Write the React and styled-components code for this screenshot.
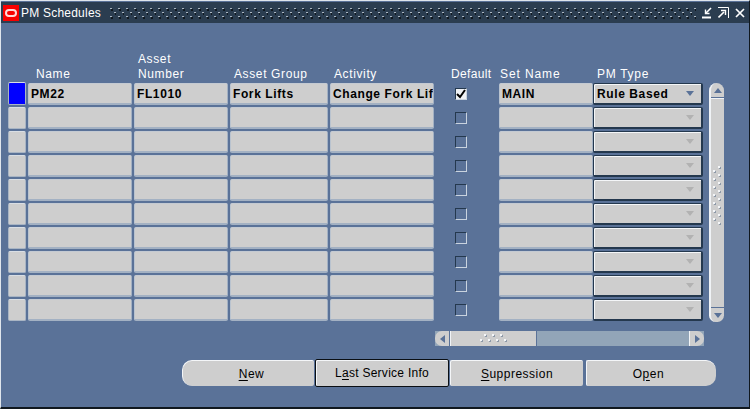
import React from 'react';
import styled, { createGlobalStyle } from 'styled-components';

const GlobalStyle = createGlobalStyle`
	html, body { margin: 0; padding: 0; background: #5a7298; overflow: hidden; }
	* { box-sizing: border-box; }
`;

const Window = styled.div`
	width: 750px;
	height: 409px;
	display: flex;
	flex-direction: column;
	background: #5a7298;
	border-style: solid;
	border-width: 1px 1px 2px 1px;
	border-color: #dfe5ec #10181f #10181f #dfe5ec;
	font-family: "Liberation Sans", Arial, sans-serif;
`;

const TitleBar = styled.div`
	height: 21px;
	margin-top: 1px;
	display: flex;
	align-items: center;
	background: #2b3d50;
	color: #fff;
`;

const Logo = styled.div`
	width: 16px;
	height: 16px;
	margin-left: 2px;
	background: #f80000;
	display: flex;
	align-items: center;
	justify-content: center;
`;

const LogoRing = styled.div`
	width: 12px;
	height: 8px;
	border: 2px solid #ffd8d8;
	border-radius: 4px;
`;

const Title = styled.div`
	font-size: 12px;
	letter-spacing: 0.22px;
	margin-left: 2px;
	white-space: nowrap;
`;

const DotsStrip = styled.svg`
	flex: 1;
	height: 12px;
	min-width: 0;
	margin: 2px 6px 0 7px;
`;

const WinIcons = styled.div`
	display: flex;
	align-items: center;
	margin-right: 4px;
`;

const WinIcon = styled.svg`
	display: block;
	margin-left: ${(p) => p.$gap ?? 0}px;
`;

const Content = styled.div`
	flex: 1;
	display: flex;
	flex-direction: column;
	padding: 27px 0 0 7px;
`;

const TableArea = styled.div`
	display: flex;
	align-items: flex-start;
	gap: 6px;
`;

const COLUMNS = '18px 104px 94px 98px 104px 61px 94px 108px';

const HeaderRow = styled.div`
	display: grid;
	grid-template-columns: ${COLUMNS};
	column-gap: 2px;
	height: 33px;
	align-items: end;
`;

const HeaderLabel = styled.div`
	font-size: 12px;
	line-height: 15px;
	letter-spacing: ${(p) => p.$spacing ?? 0.62}px;
	color: #fff;
	padding-left: ${(p) => p.$indent ?? 4}px;
	padding-bottom: 1px;
	white-space: nowrap;
`;

const Row = styled.div`
	display: grid;
	grid-template-columns: ${COLUMNS};
	column-gap: 2px;
	height: 22px;
	margin-bottom: 2px;
`;

const Selector = styled.div`
	height: ${(p) => (p.$active ? 23 : 22)}px;
	margin-top: ${(p) => (p.$active ? -1 : 0)}px;
	background: ${(p) => (p.$active ? '#0000ff' : '#cecece')};
	border: 1px solid #a9b5c4;
	border-top-color: #d9dee4;
	border-radius: 2px;
`;

const Cell = styled.div`
	height: 22px;
	background: #cecece;
	border-bottom: 2px solid #a3b1c3;
	border-right: 1px solid #a3b1c3;
	border-left: 1px solid #b9c3cf;
	border-top: 1px solid #c4cad2;
	border-radius: 2px;
	font-size: 12px;
	font-weight: bold;
	letter-spacing: 0.6px;
	line-height: 20px;
	padding-left: 2px;
	color: #000;
	white-space: nowrap;
	overflow: hidden;
`;

const CheckCell = styled.div`
	display: flex;
	align-items: center;
	justify-content: center;
	padding-right: 11px;
`;

const CheckBox = styled.div`
	width: 12px;
	height: 12px;
	border-style: solid;
	border-width: 1px;
	border-color: #24384e #c9d3df #c9d3df #24384e;
	background: ${(p) => (p.$checked ? '#eef1f5' : 'transparent')};
	display: flex;
	align-items: center;
	justify-content: center;
`;

const Combo = styled.div`
	height: 22px;
	margin-left: -2px;
	width: 110px;
	background: #cecece;
	border-style: solid;
	border-width: 1px 2px 2px 1px;
	border-color: #24384e;
	box-shadow: inset 1px 1px 0 #f4f6f8;
	border-radius: 2px;
	display: flex;
	align-items: center;
	justify-content: space-between;
	padding: 0 7px 0 3px;
	font-size: 12px;
	font-weight: bold;
	letter-spacing: 0.6px;
	color: #000;
`;

const Arrow = styled.div`
	width: 0;
	height: 0;
	border-left: 4px solid transparent;
	border-right: 4px solid transparent;
	border-top: 5px solid ${(p) => (p.$active ? '#5a7298' : '#b2b2b2')};
`;

const VScroll = styled.div`
	width: 15px;
	height: 239px;
	margin-top: 33px;
	display: flex;
	flex-direction: column;
	background: #cecece;
	border-left: 2px solid #f0f3f6;
	border-radius: 8px 8px 7px 7px;
`;

const VEnd = styled.div`
	height: 15px;
	display: flex;
	align-items: center;
	justify-content: center;
	border-bottom: ${(p) => (p.$top ? '1px solid #5a7298' : 'none')};
	border-top: ${(p) => (p.$top ? 'none' : '1px solid #5a7298')};
	box-shadow: ${(p) => (p.$top ? '0 1px 0 #f0f3f6' : 'none')};
`;

const VTriangle = styled.div`
	width: 0;
	height: 0;
	border-left: 4px solid transparent;
	border-right: 4px solid transparent;
	${(p) => (p.$up ? 'border-bottom: 5px solid #5a7298;' : 'border-top: 5px solid #5a7298;')}
`;

const VThumb = styled.div`
	flex: 1;
	display: flex;
	align-items: center;
	justify-content: center;
	padding-bottom: 14px;
`;

const HScrollRow = styled.div`
	display: flex;
	margin: 8px 0 0 427px;
`;

const HScroll = styled.div`
	width: 269px;
	height: 15px;
	display: flex;
	align-items: stretch;
	background: #92a5b8;
`;

const HTrack = styled.div`
	flex: 1;
`;

const HEnd = styled.div`
	width: 15px;
	display: flex;
	align-items: center;
	justify-content: center;
	background: #cecece;
	border-radius: ${(p) => (p.$left ? '7px 0 0 7px' : '0 7px 7px 0')};
	border-left: ${(p) => (p.$left ? 'none' : '1px solid #f0f3f6')};
	border-right: ${(p) => (p.$left ? '1px solid #5a7298' : 'none')};
`;

const HTriangle = styled.div`
	width: 0;
	height: 0;
	border-top: 4px solid transparent;
	border-bottom: 4px solid transparent;
	${(p) => (p.$left ? 'border-right: 5px solid #5a7298;' : 'border-left: 5px solid #5a7298;')}
`;

const HThumb = styled.div`
	width: 87px;
	background: #cecece;
	border-left: 1px solid #f0f3f6;
	border-right: 1px solid #5a7298;
	display: flex;
	align-items: center;
	justify-content: center;
`;

const ButtonBar = styled.div`
	display: flex;
	margin: 13px 0 0 174px;
	align-items: center;
`;

const Button = styled.div`
	width: ${(p) => p.$width}px;
	height: 26px;
	margin-right: ${(p) => p.$gap ?? 1}px;
	padding: ${(p) => p.$pad ?? '0'};
	display: flex;
	align-items: center;
	justify-content: center;
	background: #cecece;
	color: #000;
	font-size: 12px;
	letter-spacing: ${(p) => p.$spacing ?? 0.55}px;
	border-top: 1px solid #f4f6f8;
	border-left: 1px solid #f4f6f8;
	border-radius: ${(p) => p.$radius ?? '2px'};
	${(p) => p.$focused && 'height: 28px; border: 1px solid #0a0f14; box-shadow: inset 1px 1px 0 #f4f6f8;'}
`;

const Mnemonic = styled.span`
	text-decoration: underline;
	text-underline-offset: 2px;
`;

const rows = Array.from({ length: 10 }, (_, i) => i);

const first = {
	name: 'PM22',
	asset: 'FL1010',
	group: 'Fork Lifts',
	activity: 'Change Fork Lif',
	set: 'MAIN',
	type: 'Rule Based',
};

// grip dot: light square with a darker pixel at lower right
function GripDot({ x, y, light = '#f4f6f8', dark = '#8d99a8' }) {
	return (
		<>
			<rect x={x + 1} y={y + 1} width="2" height="2" fill={dark} />
			<rect x={x} y={y} width="2" height="2" fill={light} />
		</>
	);
}

function VGrip() {
	const right = Array.from({ length: 8 }, (_, i) => i * 8);
	const left = Array.from({ length: 7 }, (_, i) => 4 + i * 8);
	return (
		<svg width="9" height="60" viewBox="0 0 9 60" shapeRendering="crispEdges">
			{right.map((y) => <GripDot key={`r${y}`} x={5} y={y} />)}
			{left.map((y) => <GripDot key={`l${y}`} x={0} y={y} />)}
		</svg>
	);
}

function HGrip() {
	return (
		<svg width="28" height="9" viewBox="0 0 28 9" shapeRendering="crispEdges">
			{[4, 12, 20].map((x) => <GripDot key={`t${x}`} x={x} y={0} />)}
			{[0, 8, 16, 24].map((x) => <GripDot key={`b${x}`} x={x} y={5} />)}
		</svg>
	);
}

function TitleDots() {
	return (
		<DotsStrip shapeRendering="crispEdges">
			<defs>
				<pattern id="titleDots" width="8" height="12" patternUnits="userSpaceOnUse">
					<rect x="3" y="1" width="2" height="2" fill="#10181f" />
					<rect x="2" y="0" width="2" height="1" fill="#aab5c0" />
					<rect x="7" y="5" width="1" height="2" fill="#10181f" />
					<rect x="6" y="4" width="2" height="1" fill="#aab5c0" />
					<rect x="3" y="9" width="2" height="2" fill="#10181f" />
					<rect x="2" y="8" width="2" height="1" fill="#aab5c0" />
				</pattern>
			</defs>
			<rect width="100%" height="100%" fill="url(#titleDots)" />
		</DotsStrip>
	);
}

export default function App() {
	return (
		<Window>
			<GlobalStyle />
			<TitleBar>
				<Logo><LogoRing /></Logo>
				<Title>PM Schedules</Title>
				<TitleDots />
				<WinIcons>
					<WinIcon width="11" height="12" viewBox="0 0 11 12" fill="none" stroke="#fff">
						<path d="M0 10.5h9" strokeWidth="2" />
						<path d="M9 1L4 6" strokeWidth="1.6" />
						<path d="M3.5 2.5V6.5H7.5" strokeWidth="1.4" />
					</WinIcon>
					<WinIcon $gap={5} width="11" height="12" viewBox="0 0 11 12" fill="none" stroke="#fff">
						<path d="M0 .5h10.5V11" strokeWidth="1" />
						<path d="M0.5 10.5L6 5" strokeWidth="1.6" />
						<path d="M3 3.5H7.5V8" strokeWidth="1.4" />
					</WinIcon>
					<WinIcon $gap={6} width="10" height="10" viewBox="0 0 10 10" fill="none" stroke="#fff" strokeWidth="1.7">
						<path d="M1 1l8 8M9 1L1 9" />
					</WinIcon>
				</WinIcons>
			</TitleBar>
			<Content>
				<TableArea>
					<div>
						<HeaderRow>
							<HeaderLabel />
							<HeaderLabel $indent={8}>Name</HeaderLabel>
							<HeaderLabel>Asset<br />Number</HeaderLabel>
							<HeaderLabel>Asset Group</HeaderLabel>
							<HeaderLabel>Activity</HeaderLabel>
							<HeaderLabel $indent={15} $spacing={0.35}>Default</HeaderLabel>
							<HeaderLabel $indent={1} $spacing={0.9}>Set Name</HeaderLabel>
							<HeaderLabel $indent={2} $spacing={0.7}>PM Type</HeaderLabel>
						</HeaderRow>
						{rows.map((i) => {
							const r = i === 0 ? first : {};
							return (
								<Row key={i}>
									<Selector $active={i === 0} />
									<Cell>{r.name}</Cell>
									<Cell>{r.asset}</Cell>
									<Cell>{r.group}</Cell>
									<Cell>{r.activity}</Cell>
									<CheckCell>
										<CheckBox $checked={i === 0}>
											{i === 0 && (
												<svg width="10" height="10" viewBox="0 0 10 10" fill="none" stroke="#000" strokeWidth="2">
													<path d="M1 5l3 3 5-7" />
												</svg>
											)}
										</CheckBox>
									</CheckCell>
									<Cell>{r.set}</Cell>
									<Combo $active={i === 0}>
										{r.type || <span />}
										<Arrow $active={i === 0} />
									</Combo>
								</Row>
							);
						})}
					</div>
					<VScroll>
						<VEnd $top><VTriangle $up /></VEnd>
						<VThumb><VGrip /></VThumb>
						<VEnd><VTriangle /></VEnd>
					</VScroll>
				</TableArea>
				<HScrollRow>
					<HScroll>
						<HEnd $left><HTriangle $left /></HEnd>
						<HThumb><HGrip /></HThumb>
						<HTrack />
						<HEnd><HTriangle /></HEnd>
					</HScroll>
				</HScrollRow>
				<ButtonBar>
					<Button $width={132} $pad="0 0 0 6px" $radius="10px 2px 2px 10px"><span><Mnemonic>N</Mnemonic>ew</span></Button>
					<Button $width={134} $spacing={0.27} $focused><span>L<Mnemonic>a</Mnemonic>st Service Info</span></Button>
					<Button $width={133} $gap={3} $spacing={0.5}><span><Mnemonic>S</Mnemonic>uppression</span></Button>
					<Button $width={130} $pad="0 6px 0 0" $radius="2px 10px 10px 2px"><span>O<Mnemonic>p</Mnemonic>en</span></Button>
				</ButtonBar>
			</Content>
		</Window>
	);
}
